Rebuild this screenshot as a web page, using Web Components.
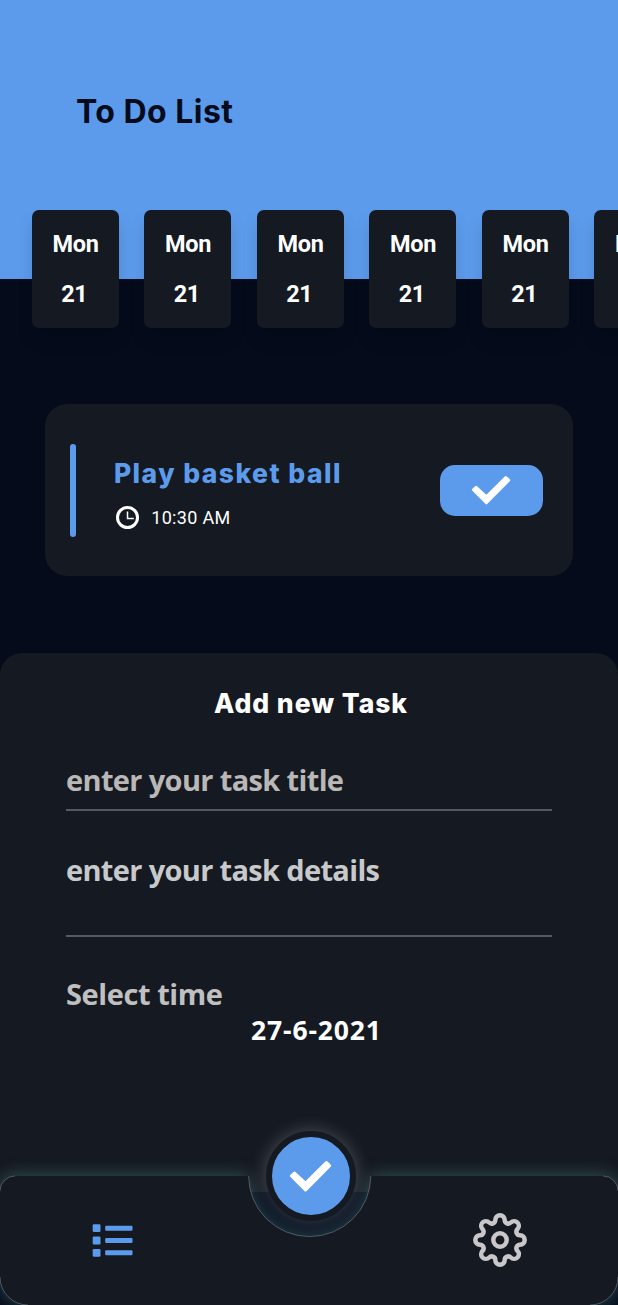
<!DOCTYPE html>
<html lang="en">
<head>
<meta charset="utf-8">
<title>To Do List</title>
<style>
html,body{margin:0;background:#050b1b}
body{width:618px;height:1305px;overflow:hidden;font-family:Inter,sans-serif;color:#fff}
</style>
</head>
<body>
<todo-app></todo-app>
<script>
const define=(name,html,after)=>customElements.define(name,class extends HTMLElement{
  constructor(){super();this.attachShadow({mode:'open'}).innerHTML=html;}
  connectedCallback(){if(after)after(this);}
});

// Single-line text whose tracking is set so that it fills a given width.
define('fit-text','<style>:host{display:block;white-space:nowrap}span{display:inline-block}</style><span><slot></slot></span>',el=>{
  const span=el.shadowRoot.querySelector('span'),w=parseFloat(el.getAttribute('w'));
  const text=span.firstChild.assignedNodes({flatten:true}).map(n=>n.textContent).join('').trim();
  span.style.letterSpacing='0';
  const ls=(w-span.getBoundingClientRect().width)/(text.length-1);
  span.style.letterSpacing=ls+'px';span.style.marginRight=-ls+'px';
});

define('check-icon',`<style>:host{display:block}svg{display:block;width:100%;height:100%}</style>
<svg viewBox="0 0 40 30.5"><path d="M2.4 14.8 5.1 12.3 15.4 21.8 34.8 2.5 37.7 5.2 15.4 27.8Z" fill="#fff" stroke="#fff" stroke-width="3" stroke-linejoin="round"/></svg>`);

define('clock-icon',`<style>:host{display:block;width:24px;height:24px}svg{display:block;overflow:visible}</style>
<svg width="24" height="24" fill="none" stroke="#fff"><circle cx="12.5" cy="11.5" r="10" stroke-width="3"/><path d="M12.5 5.5V12.5H18.8" stroke-width="1.5"/></svg>`);

define('list-icon',`<style>:host{display:block;width:40px;height:33px}svg{display:block;overflow:visible}</style>
<svg width="40" height="33" fill="#5c9bec"><rect x="-.3" y=".2" width="7.8" height="7.8" rx="1.2"/><rect x="-.3" y="12.6" width="7.8" height="7.8" rx="1.2"/><rect x="-.3" y="25" width="7.8" height="7.8" rx="1.2"/><rect x="12.2" y="1.7" width="27.3" height="5" rx="1"/><rect x="12.2" y="14" width="27.3" height="5" rx="1"/><rect x="12.2" y="26.2" width="27.3" height="5" rx="1"/></svg>`);

define('gear-icon',`<style>:host{display:block;width:56px;height:56px}svg{display:block}</style>
<svg width="56" height="56" viewBox="-28 -28 56 56" fill="none" stroke="#c8c8ca" stroke-width="4.5"><path/><circle r="6.7"/></svg>`,el=>{
  const at=(x,y,k)=>{const a=k*Math.PI/4,c=Math.cos(a),s=Math.sin(a);return (x*c-y*s).toFixed(2)+' '+(x*s+y*c).toFixed(2)};
  let d='M'+at(-4.7,-20,0);
  for(let k=0;k<8;k++)d+='A4.7 4.7 0 0 1 '+at(4.7,-20,k)+'A3.57 3.57 0 0 0 '+at(-4.7,-20,k+1);
  el.shadowRoot.querySelector('path').setAttribute('d',d+'Z');
});

define('day-card',`<style>
:host{display:flex;flex-direction:column;align-items:center;flex:none;box-sizing:border-box;width:87px;height:118px;padding-top:9px;border-radius:7px;background:#151921;box-shadow:0 12px 16px rgba(5,11,27,.13);font:700 23.5px/50px Roboto,sans-serif}
</style><fit-text w="46.5" style="margin-left:1.5px">Mon</fit-text><fit-text w="26.5" style="margin-right:1px">21</fit-text>`);

define('app-header',`<style>
:host{display:block;height:279px;background:#5c9bec;color:#050b1b}
h1{margin:0;padding:92px 0 0 76px;font:700 32px/40px Inter,sans-serif}
.days{display:flex;gap:25.5px;padding:78px 0 40px 31.5px;overflow:hidden;color:#fff}
</style><h1><fit-text w="157"><slot></slot></fit-text></h1>
<div class="days"><day-card></day-card><day-card></day-card><day-card></day-card><day-card></day-card><day-card></day-card><day-card></day-card></div>`);

define('task-card',`<style>
:host{display:flex;align-items:center;box-sizing:border-box;height:172px;margin:125px 45px 0;padding:0 30px 0 25.4px;border-radius:22px;background:#151921}
.bar{width:6px;height:93px;border-radius:3px;background:#5c9bec}
.body{flex:1;padding:4px 0 0 37.5px}
h2{margin:0;color:#5c9bec;font:800 26.5px/40px Inter,sans-serif}
.time{display:flex;align-items:center;gap:12px;margin:11.5px 0 0 1.3px;font:400 18px/26px Roboto,sans-serif}
.done{display:grid;place-items:center;width:103.5px;height:51px;border-radius:15px;background:#5c9bec;border:0;padding:0}
.done check-icon{width:40px;height:30.5px}
</style><div class="bar"></div><div class="body"><h2><fit-text w="226.5"><slot name="title"></slot></fit-text></h2>
<div class="time"><clock-icon></clock-icon><fit-text w="79">10:30 AM</fit-text></div></div>
<button class="done" aria-label="Done"><check-icon></check-icon></button>`);

define('task-field',`<style>:host{display:block;box-sizing:border-box;border-bottom:2px solid #58585f;font:700 29px/40px "Open Sans","Noto Sans",sans-serif}</style><slot></slot>`);

define('task-form',`<style>
:host{display:block;box-sizing:border-box;height:539px;margin-top:77px;padding:30px 66px 0;border-radius:22px 22px 0 0;background:#151921}
h3{margin:0 0 0 148px;font:800 26.5px/40px Inter,sans-serif}
.a{height:51px;margin-top:37px;color:#bab7b7}
.b{height:87px;margin-top:39px;color:#c7c9ca}
.c{margin-top:37px;color:#c0c0c0;font:700 29px/40px "Open Sans","Noto Sans",sans-serif}
.d{margin:-1px 0 0 185px;font:700 26.5px/34px "Open Sans","Noto Sans",sans-serif}
</style><h3><fit-text w="193">Add new Task</fit-text></h3>
<task-field class="a"><fit-text w="278">enter your task title</fit-text></task-field>
<task-field class="b"><fit-text w="314">enter your task details</fit-text></task-field>
<fit-text class="c" w="157">Select time</fit-text>
<fit-text class="d" w="130">27-6-2021</fit-text>`);

define('tab-bar',`<style>
:host{display:grid;grid-template-columns:1fr 90px 1fr;position:relative;height:129px;margin-top:-16px}
.shape{position:absolute;inset:0;overflow:visible}
.glow{filter:drop-shadow(0 0 9px rgba(100,175,170,.4))}
list-icon,gear-icon{position:relative}
list-icon{margin:48px 0 0 92.5px}
gear-icon{margin:36px 0 0 117.8px}
.main{position:relative;display:grid;place-items:center;box-sizing:border-box;width:90px;height:90px;margin:-45px 0 0 1.5px;padding:0;border:6px solid #151921;border-radius:50%;background:#5c9bec;box-shadow:0 0 18px rgba(255,255,255,.24)}
.main check-icon{width:43px;height:32.8px}
</style>
<svg class="shape" width="618" height="129"><path class="glow" d="M15 0H248.6A61 60.5 0 0 0 370.8 0H603A15 15 0 0 1 618 15V101A28 28 0 0 1 590 129H28A28 28 0 0 1 0 101V15A15 15 0 0 1 15 0Z" fill="#151921"/>
<path d="M248.6 0A61 60.5 0 0 0 370.8 0M0 15A15 15 0 0 1 15 0M603 0A15 15 0 0 1 618 15M0 101A28 28 0 0 0 28 129M590 129A28 28 0 0 0 618 101" fill="none" stroke="#fff" stroke-opacity=".3" stroke-width=".8"/></svg>
<list-icon></list-icon><button class="main" aria-label="Confirm"><check-icon></check-icon></button><gear-icon></gear-icon>`);

define('todo-app',`<style>:host{display:block;width:618px;height:1305px;overflow:hidden;background:#050b1b}</style>
<app-header>To Do List</app-header>
<task-card><span slot="title">Play basket ball</span></task-card>
<task-form></task-form>
<tab-bar></tab-bar>`);
</script>
</body>
</html>
